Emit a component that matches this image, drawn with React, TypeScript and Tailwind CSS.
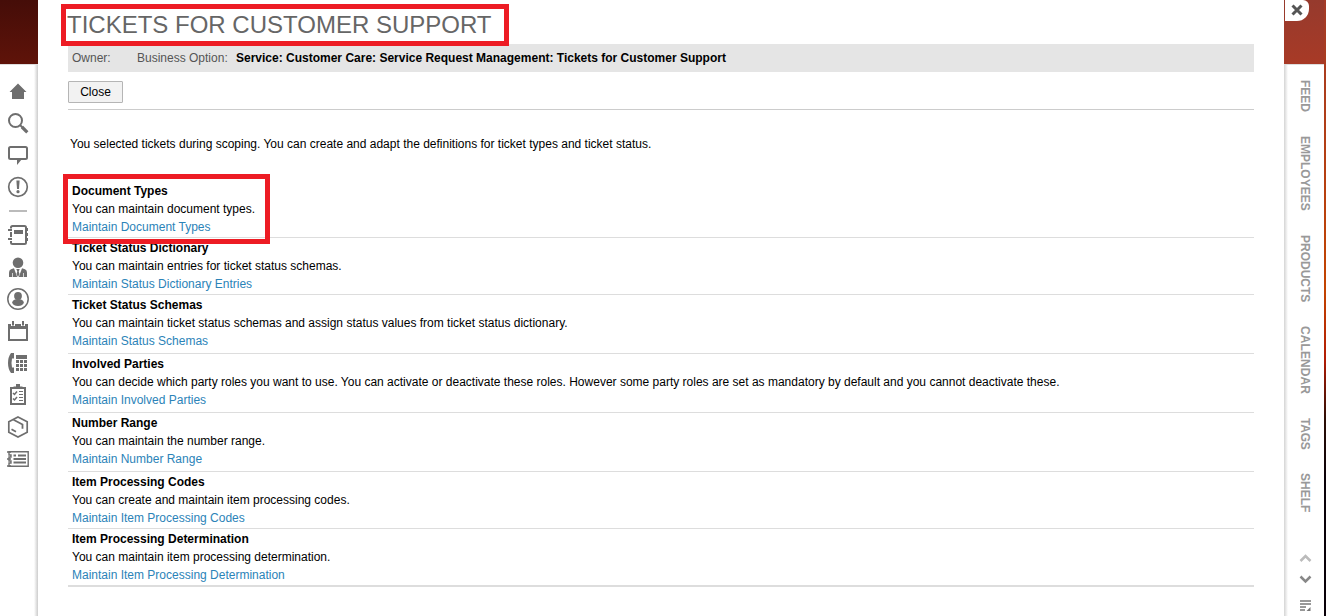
import type { ReactNode } from 'react';

interface Section {
  title: string;
  text: string;
  link: string;
  row: string;
}

const sections: Section[] = [
  {
    title: 'Document Types',
    text: 'You can maintain document types.',
    link: 'Maintain Document Types',
    row: 'h-[57px] border-b',
  },
  {
    title: 'Ticket Status Dictionary',
    text: 'You can maintain entries for ticket status schemas.',
    link: 'Maintain Status Dictionary Entries',
    row: 'h-[57px] border-b',
  },
  {
    title: 'Ticket Status Schemas',
    text: 'You can maintain ticket status schemas and assign status values from ticket status dictionary.',
    link: 'Maintain Status Schemas',
    row: 'h-[59px] border-b',
  },
  {
    title: 'Involved Parties',
    text: 'You can decide which party roles you want to use. You can activate or deactivate these roles. However some party roles are set as mandatory by default and you cannot deactivate these.',
    link: 'Maintain Involved Parties',
    row: 'h-[59px] border-b',
  },
  {
    title: 'Number Range',
    text: 'You can maintain the number range.',
    link: 'Maintain Number Range',
    row: 'h-[59px] border-b',
  },
  {
    title: 'Item Processing Codes',
    text: 'You can create and maintain item processing codes.',
    link: 'Maintain Item Processing Codes',
    row: 'h-[57px] border-b',
  },
  {
    title: 'Item Processing Determination',
    text: 'You can maintain item processing determination.',
    link: 'Maintain Item Processing Determination',
    row: 'h-[58px] border-b-2',
  },
];

const tabs = [
  { label: 'FEED', size: 'h-[32px]' },
  { label: 'EMPLOYEES', size: 'h-[75px]' },
  { label: 'PRODUCTS', size: 'h-[67px]' },
  { label: 'CALENDAR', size: 'h-[68px] tracking-[0.1px]' },
  { label: 'TAGS', size: 'h-[31px] tracking-[-0.2px]' },
  { label: 'SHELF', size: 'h-[40px]' },
];

function Icon({ children }: { children: ReactNode }) {
  return (
    <svg viewBox="0 0 24 24" className="mb-2 h-6 w-6 shrink-0" fill="none" stroke="#6e6e6e" strokeWidth="2">
      {children}
    </svg>
  );
}

function NavIcons() {
  return (
    <>
      {/* Home */}
      <Icon>
        <path d="M12 4.500 20.500 13H18v7H6v-7H3.500z" fill="#6e6e6e" stroke="none" />
      </Icon>
      {/* Search */}
      <Icon>
        <circle cx="9.500" cy="9.500" r="6.500" />
        <path d="m14 14 3 3" />
        <path d="m16 16 5.300 5.300" strokeWidth="3.200" />
      </Icon>
      {/* Feed */}
      <Icon>
        <rect x="3" y="4" width="18" height="12" rx="1.500" />
        <path d="M11 16v6l5-6z" fill="#6e6e6e" stroke="none" />
      </Icon>
      {/* Alerts */}
      <Icon>
        <circle cx="12" cy="12" r="9.300" strokeWidth="1.700" />
        <path d="M10.400 5.500h3.200l-.6 8.500h-2z" fill="#6e6e6e" stroke="none" />
        <circle cx="12" cy="16.700" r="1.600" fill="#6e6e6e" stroke="none" />
      </Icon>
      <div className="mt-[3px] mb-[5px] ml-[3px] h-2 w-[18px] shrink-0 border-t-2 border-[#bbb]" />
      {/* Notebook */}
      <Icon>
        <rect x="5" y="3" width="15" height="18" rx="1.500" />
        <path d="M5 5v14" stroke="#fff" strokeWidth="2.200" />
        <path d="M2 7h4M2 16h4" />
        <path d="M5 4v1.500M5 9v5M5 18v2" />
        <path d="M21.500 5v3M21.500 10v3M21.500 15v3" strokeWidth="1" />
        <path d="M8 7h9v4H8z" fill="#6e6e6e" stroke="none" />
      </Icon>
      {/* Contact */}
      <Icon>
        <circle cx="12" cy="7.700" r="5.300" fill="#6e6e6e" stroke="none" />
        <path d="M3 22v-4.500Q3 15 5 14.300L8 13.300 11.200 22z" fill="#6e6e6e" stroke="none" />
        <path d="M21 22v-4.500q0-2.500-2-3.200l-3-1L12.800 22z" fill="#6e6e6e" stroke="none" />
        <path d="M10.300 14h3.400l-1 2.500.8 2.500-1.500 3-1.500-3 .8-2.500z" fill="#6e6e6e" stroke="none" />
        <path d="M6.500 18v4M17.500 18v4" stroke="#fff" strokeWidth=".7" />
      </Icon>
      {/* Account */}
      <Icon>
        <circle cx="12" cy="12" r="10.200" strokeWidth="1.500" />
        <circle cx="12" cy="8.900" r="3.900" fill="#6e6e6e" stroke="none" />
        <ellipse cx="12" cy="15.500" rx="5.800" ry="3.500" fill="#6e6e6e" stroke="none" />
      </Icon>
      {/* Calendar */}
      <Icon>
        <path d="M3 6h18v15H3z" />
        <path d="M2 5h20v5H2z" fill="#6e6e6e" stroke="none" />
        <path d="M7 2v5M17 2v5" stroke="#fff" strokeWidth="4" />
        <path d="M7 2v4.500M17 2v4.500" />
      </Icon>
      {/* Phone */}
      <Icon>
        <path d="M8 2H5Q2 6 2 12t3 10h3v-5.500H6Q5 12 6 7.500h2z" fill="#6e6e6e" stroke="none" />
        <path d="M10 4h11v4H10z" fill="#6e6e6e" stroke="none" />
        <path d="M10 10.500h11M10 14.500h11M10 18.500h11" strokeWidth="3" strokeDasharray="3 1" />
      </Icon>
      {/* Checklist */}
      <Icon>
        <path d="M5 5h14v16H5z" />
        <path d="M7.500 3.500h2.500V1h4v2.500h2.500V6h-9z" fill="#6e6e6e" stroke="none" />
        <path d="m7 10 1.500 1.500L11 8.500M7 15.500l1.500 1.500L11 14" strokeWidth="1.500" />
        <path d="M13 8.500h4M13 11.500h4M13 14.500h4M13 17.500h4" strokeWidth="1.100" />
      </Icon>
      {/* Product */}
      <Icon>
        <path d="m12 2 9.200 4.800v10.400L12 22l-9.200-4.800V6.800z" strokeWidth="1.700" />
        <path d="m7.500 4.800 9 4.700v4.200M5.500 14.300l4.500 2.500" strokeWidth="1.800" />
      </Icon>
      {/* Tickets */}
      <Icon>
        <path d="M3 4.800h19.200v14.400H3v-3.200h2v-2H3v-4h2V8H3z" strokeWidth="1.400" />
        <path d="M1 5h4M1 12h4M1 19h4" strokeWidth="1.400" />
        <path d="M7.500 8.500h2.500M12 8.500h8M7.500 12h12.500M7.500 15.500h12.500" strokeWidth="1.800" />
      </Icon>
    </>
  );
}

function Sidebar() {
  return (
    <nav className="flex w-[38px] shrink-0 flex-col">
      <div className="h-16 shrink-0 bg-linear-to-b from-[#450d08] to-[#5f1309]" />
      <div className="flex flex-1 border-t border-[#ddd]">
        <div className="flex flex-1 flex-col pt-[14px] pl-[6px]">
          <NavIcons />
        </div>
        <div className="w-1 bg-linear-to-r from-white to-[#ccc]" />
      </div>
    </nav>
  );
}

function RightRail() {
  return (
    <aside className="flex w-[42px] shrink-0">
      <div className="flex w-10 flex-col">
        <div className="h-16 w-[42px] shrink-0 bg-linear-to-b from-[#963a2d] to-[#a83a26] pl-px">
          <button className="flex h-[21px] w-6 items-center justify-center rounded-tr-[6px] rounded-br-[12px] bg-white">
            <svg viewBox="0 0 12 12" className="mb-px h-3 w-3" stroke="#555" strokeWidth="3">
              <path d="m1.500 1.500 9 9M10.500 1.500l-9 9" />
            </svg>
          </button>
        </div>
        <div className="flex flex-1 border-t border-[#ddd]">
          <div className="w-1 bg-linear-to-r from-[#d4d4d4] to-white" />
          <div className="flex flex-1 flex-col pt-[15px] pl-[10px]">
            <div className="flex flex-col gap-6">
              {tabs.map((tab) => (
                <div
                  key={tab.label}
                  className={`w-[14px] text-[12px] leading-[14px] font-bold whitespace-nowrap text-[#999] [writing-mode:vertical-rl] ${tab.size}`}
                >
                  {tab.label}
                </div>
              ))}
            </div>
            <svg viewBox="0 0 14 62" className="mt-[38px] h-[62px] w-[14px] shrink-0" fill="none" strokeWidth="2.500">
              <path d="m2.500 10 5-5 5 5" stroke="#bbb" />
              <path d="m2.500 25.500 5 5 5-5" stroke="#888" />
              <path d="M2 50h11M2 53h11M2 56h6M2 59h5" stroke="#777" strokeWidth="1.700" />
              <path d="m8.500 60 4-4v4z" fill="#777" />
            </svg>
          </div>
        </div>
      </div>
      <div className="w-[2px] bg-[linear-gradient(#a33a27_0px,#b8400e_200px,#c34400_290px,#b21c05_360px,#2a0d05_420px,#090008_480px)]" />
    </aside>
  );
}

export default function App() {
  return (
    <div className="flex h-[616px] w-[1326px] overflow-hidden bg-white font-['Liberation_Sans',Arial,sans-serif] text-[12px] text-black">
      <Sidebar />
      <main className="min-w-0 flex-1 pr-[30px] pl-[30px]">
        <div className="relative h-11">
          <h1 className="-ml-px pt-[9px] text-[24px] leading-8 whitespace-nowrap text-[#666]">
            TICKETS FOR CUSTOMER SUPPORT
          </h1>
          <div className="absolute top-[4px] left-[-7px] h-[42px] w-[448px] border-5 border-[#ed1c24]" />
        </div>
        <div className="flex h-7 items-center bg-[#e5e5e5] pl-1 text-[#555]">
          <span className="w-[65px]">Owner:</span>
          <span className="w-[99px]">Business Option:</span>
          <span className="font-bold text-black">
            Service: Customer Care: Service Request Management: Tickets for Customer Support
          </span>
        </div>
        <div className="h-[38px] border-b border-[#ccc] pt-[9px]">
          <button className="h-[22px] w-[55px] rounded-[1px] border border-[#b5b5b5] bg-[#f2f2f2]">Close</button>
        </div>
        <p className="mt-[25px] mb-[28px] pl-[2px] leading-[18px]">
          You selected tickets during scoping. You can create and adapt the definitions for ticket types and ticket
          status.
        </p>
        <div className="relative">
          {sections.map((section) => (
            <section key={section.title} className={`border-[#ddd] pt-px pl-1 leading-[18px] ${section.row}`}>
              <h2 className="font-bold">{section.title}</h2>
              <p className="whitespace-nowrap">{section.text}</p>
              <a className="block text-[#2b83b8]">{section.link}</a>
            </section>
          ))}
          <div className="absolute top-[-7px] left-[-5px] h-[70px] w-[207px] border-5 border-[#ed1c24]" />
        </div>
      </main>
      <RightRail />
    </div>
  );
}
